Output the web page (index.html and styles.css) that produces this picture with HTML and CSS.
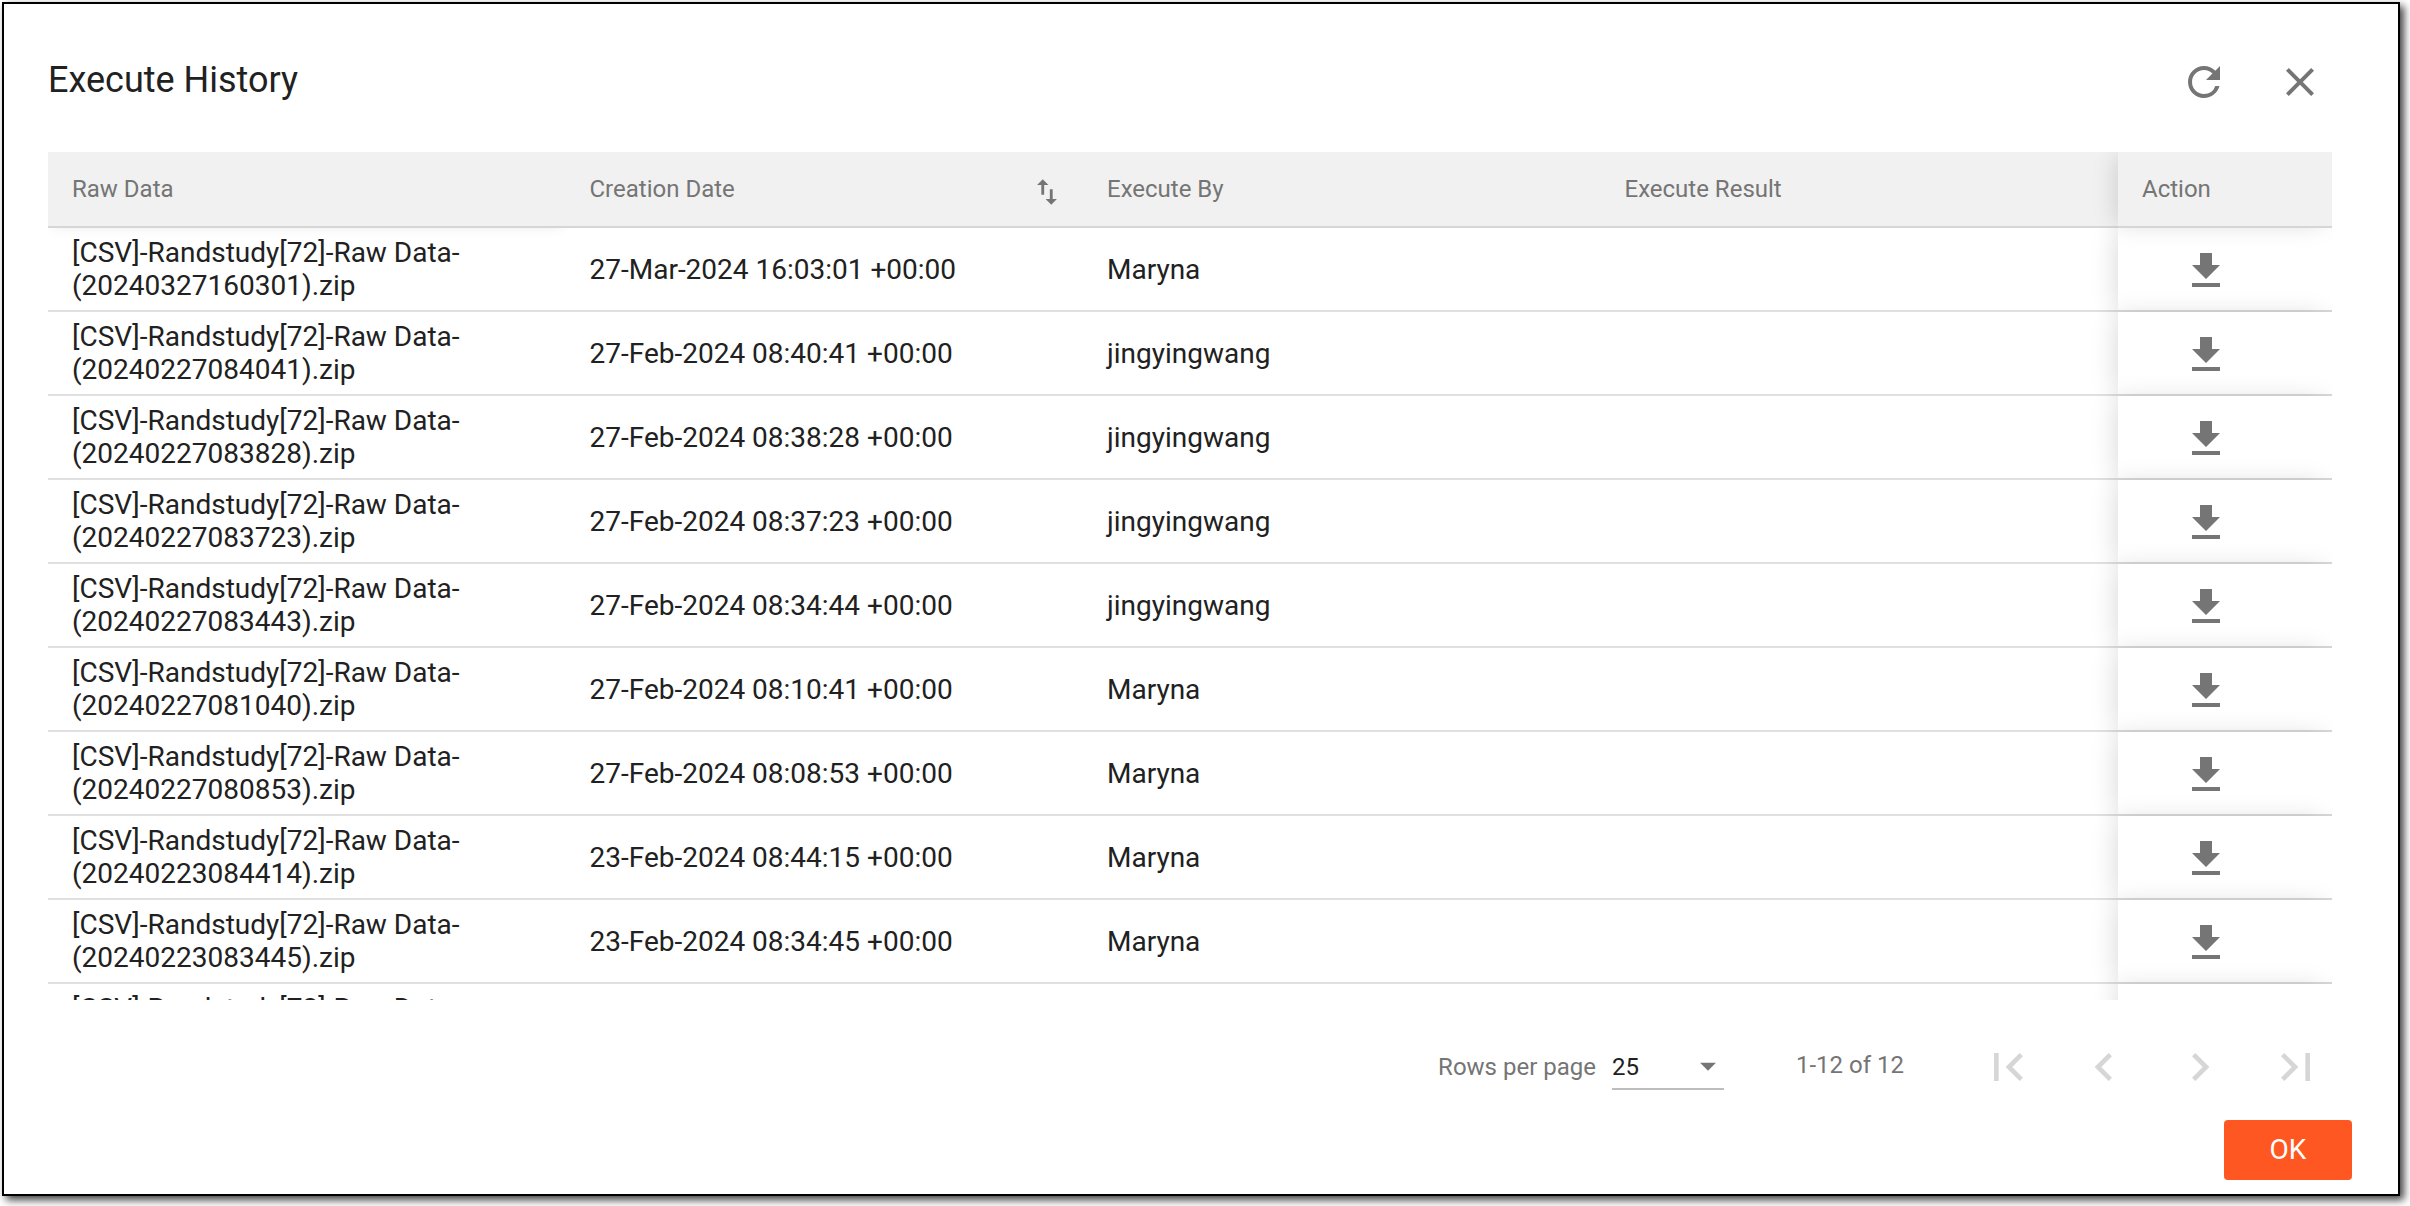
FILE: index.html
```
<!DOCTYPE html>
<html lang="en">
<head>
<meta charset="utf-8">
<title>Execute History</title>
<link rel="stylesheet" href="styles.css">
</head>
<body>
<svg class="defs" aria-hidden="true">
  <symbol id="download" viewBox="0 0 24 24"><path d="M19 9h-4V3H9v6H5l7 7 7-7zM5 18v2h14v-2H5z"/></symbol>
</svg>
<section class="dialog">
  <header class="dialog-head">
    <h1>Execute History</h1>
    <button class="icon-btn"><svg viewBox="0 0 24 24"><path d="M17.65 6.35A7.958 7.958 0 0 0 12 4c-4.42 0-7.99 3.58-7.99 8s3.57 8 7.99 8c3.73 0 6.84-2.55 7.73-6h-2.08A5.99 5.99 0 0 1 12 18c-3.31 0-6-2.69-6-6s2.69-6 6-6c1.66 0 3.14.69 4.22 1.78L13 11h7V4l-2.35 2.35z"/></svg></button>
    <button class="icon-btn"><svg viewBox="0 0 24 24"><path d="M19 6.41 17.59 5 12 10.59 6.41 5 5 6.41 10.59 12 5 17.59 6.41 19 12 13.41 17.59 19 19 17.59 13.41 12z"/></svg></button>
  </header>
  <div class="table">
    <div class="row head">
      <div class="cell">Raw Data</div>
      <div class="cell">Creation Date<svg class="sort" viewBox="0 0 24 24"><path d="M16 17.01V10h-2v7.01h-3L15 21l4-3.99h-3zM9 3 5 6.99h3V14h2V6.99h3L9 3z"/></svg></div>
      <div class="cell">Execute By</div>
      <div class="cell">Execute Result</div>
      <div class="cell action">Action</div>
    </div>
    <div class="row"><div class="cell">[CSV]-Randstudy[72]-Raw Data-(20240327160301).zip</div><div class="cell">27-Mar-2024 16:03:01 +00:00</div><div class="cell">Maryna</div><div class="cell"></div><div class="cell action"><svg class="dl"><use href="#download"/></svg></div></div>
    <div class="row"><div class="cell">[CSV]-Randstudy[72]-Raw Data-(20240227084041).zip</div><div class="cell">27-Feb-2024 08:40:41 +00:00</div><div class="cell">jingyingwang</div><div class="cell"></div><div class="cell action"><svg class="dl"><use href="#download"/></svg></div></div>
    <div class="row"><div class="cell">[CSV]-Randstudy[72]-Raw Data-(20240227083828).zip</div><div class="cell">27-Feb-2024 08:38:28 +00:00</div><div class="cell">jingyingwang</div><div class="cell"></div><div class="cell action"><svg class="dl"><use href="#download"/></svg></div></div>
    <div class="row"><div class="cell">[CSV]-Randstudy[72]-Raw Data-(20240227083723).zip</div><div class="cell">27-Feb-2024 08:37:23 +00:00</div><div class="cell">jingyingwang</div><div class="cell"></div><div class="cell action"><svg class="dl"><use href="#download"/></svg></div></div>
    <div class="row"><div class="cell">[CSV]-Randstudy[72]-Raw Data-(20240227083443).zip</div><div class="cell">27-Feb-2024 08:34:44 +00:00</div><div class="cell">jingyingwang</div><div class="cell"></div><div class="cell action"><svg class="dl"><use href="#download"/></svg></div></div>
    <div class="row"><div class="cell">[CSV]-Randstudy[72]-Raw Data-(20240227081040).zip</div><div class="cell">27-Feb-2024 08:10:41 +00:00</div><div class="cell">Maryna</div><div class="cell"></div><div class="cell action"><svg class="dl"><use href="#download"/></svg></div></div>
    <div class="row"><div class="cell">[CSV]-Randstudy[72]-Raw Data-(20240227080853).zip</div><div class="cell">27-Feb-2024 08:08:53 +00:00</div><div class="cell">Maryna</div><div class="cell"></div><div class="cell action"><svg class="dl"><use href="#download"/></svg></div></div>
    <div class="row"><div class="cell">[CSV]-Randstudy[72]-Raw Data-(20240223084414).zip</div><div class="cell">23-Feb-2024 08:44:15 +00:00</div><div class="cell">Maryna</div><div class="cell"></div><div class="cell action"><svg class="dl"><use href="#download"/></svg></div></div>
    <div class="row"><div class="cell">[CSV]-Randstudy[72]-Raw Data-(20240223083445).zip</div><div class="cell">23-Feb-2024 08:34:45 +00:00</div><div class="cell">Maryna</div><div class="cell"></div><div class="cell action"><svg class="dl"><use href="#download"/></svg></div></div>
    <div class="row"><div class="cell"><span>[CSV]-Randstudy[72]-Raw Data-<br>&nbsp;</span></div><div class="cell"></div><div class="cell"></div><div class="cell"></div><div class="cell action"></div></div>
  </div>
  <div class="pager">
    <span class="per-page">Rows per page</span>
    <div class="select">25<svg viewBox="0 0 24 24"><path d="m7 10 5 5 5-5z"/></svg></div>
    <span class="range">1-12 of 12</span>
    <button class="page-btn"><svg viewBox="0 0 24 24"><path d="M18.41 16.59 13.82 12l4.59-4.59L17 6l-6 6 6 6zM6 6h2v12H6z"/></svg></button>
    <button class="page-btn"><svg viewBox="0 0 24 24"><path d="M15.41 7.41 14 6l-6 6 6 6 1.41-1.41L10.83 12z"/></svg></button>
    <button class="page-btn"><svg viewBox="0 0 24 24"><path d="M10 6 8.59 7.41 13.17 12l-4.58 4.59L10 18l6-6z"/></svg></button>
    <button class="page-btn"><svg viewBox="0 0 24 24"><path d="M5.59 7.41 10.18 12l-4.59 4.59L7 18l6-6-6-6zM16 6h2v12h-2z"/></svg></button>
  </div>
  <footer class="actions"><button class="ok">OK</button></footer>
</section>
</body>
</html>
```
FILE: styles.css
```
* { box-sizing: border-box; }
body {
  margin: 0;
  height: 1206px;
  overflow: hidden;
  padding: 2px 10px 10px 2px;
  background: #fff;
  color: #212121;
  font: 28px/33px Roboto, sans-serif;
}
button { border: 0; padding: 0; background: none; font: inherit; }
svg { fill: #757575; display: block; flex: none; }
.defs { position: absolute; width: 0; height: 0; }
.dialog {
  height: 1194px;
  border: 2px solid #000;
  background: #fff;
  box-shadow: 4px 4px 8px rgba(0, 0, 0, .75);
  display: flex;
  flex-direction: column;
  padding: 0 44px;
}
.dialog-head {
  height: 148px;
  padding: 30px 6px 22px 0;
  display: flex;
  align-items: center;
}
h1 { margin: 0 auto 4px 0; font-size: 36px; line-height: 42px; font-weight: 400; }
.icon-btn { width: 96px; height: 96px; display: grid; place-items: center; }
.icon-btn svg { width: 48px; height: 48px; }
.table {
  width: 2284px;
  height: 848px;
  overflow: hidden;
}
.row {
  display: grid;
  grid-template-columns: repeat(4, 517.5px) 214px;
  height: 84px;
}
.cell {
  padding: 0 24px;
  display: flex;
  align-items: center;
  border-bottom: 2px solid #e0e0e0;
}
.row .cell:first-child { padding-right: 100px; }
.row .action {
  background: #fff;
  position: relative;
  border-color: #d8d8d8;
  box-shadow: -6px 0 24px -4px rgba(0, 0, 0, .15);
}
.row:not(.head) .action { justify-content: center; padding: 4px 38px 0 0; }
.dl { width: 48px; height: 48px; }
.row.head {
  height: 76px;
  color: #757575;
  font-size: 24px;
  position: relative;
  z-index: 2;
}
.head .cell { border-color: #d6d6d6; background: #f1f1f1; }
.head .cell:first-child { box-shadow: 0 2px 12px -4px rgba(0, 0, 0, .1); }
.sort { width: 34px; height: 34px; margin: 6px -5px 0 auto; }
.pager {
  height: 120px;
  padding: 14px 10px 0 0;
  display: flex;
  align-items: center;
  color: #757575;
  font-size: 24px;
}
.per-page { margin-left: auto; }
.select {
  width: 112px;
  height: 46px;
  padding-top: 2px;
  margin: 0 72px 0 16px;
  border-bottom: 2px solid #bdbdbd;
  color: #212121;
  display: flex;
  align-items: center;
  justify-content: space-between;
}
.select svg { width: 38px; height: 38px; margin: -2px -3px 0 0; }
.range { margin: 0 56px 3px 0; }
.page-btn { width: 96px; height: 96px; display: grid; place-items: center; }
.page-btn svg { width: 56px; height: 56px; fill: #d6d6d6; }
.actions { display: flex; justify-content: flex-end; padding-right: 2px; }
.ok {
  width: 128px;
  height: 60px;
  padding-bottom: 2px;
  border-radius: 4px;
  background: #ff5722;
  color: #fff;
}
```
